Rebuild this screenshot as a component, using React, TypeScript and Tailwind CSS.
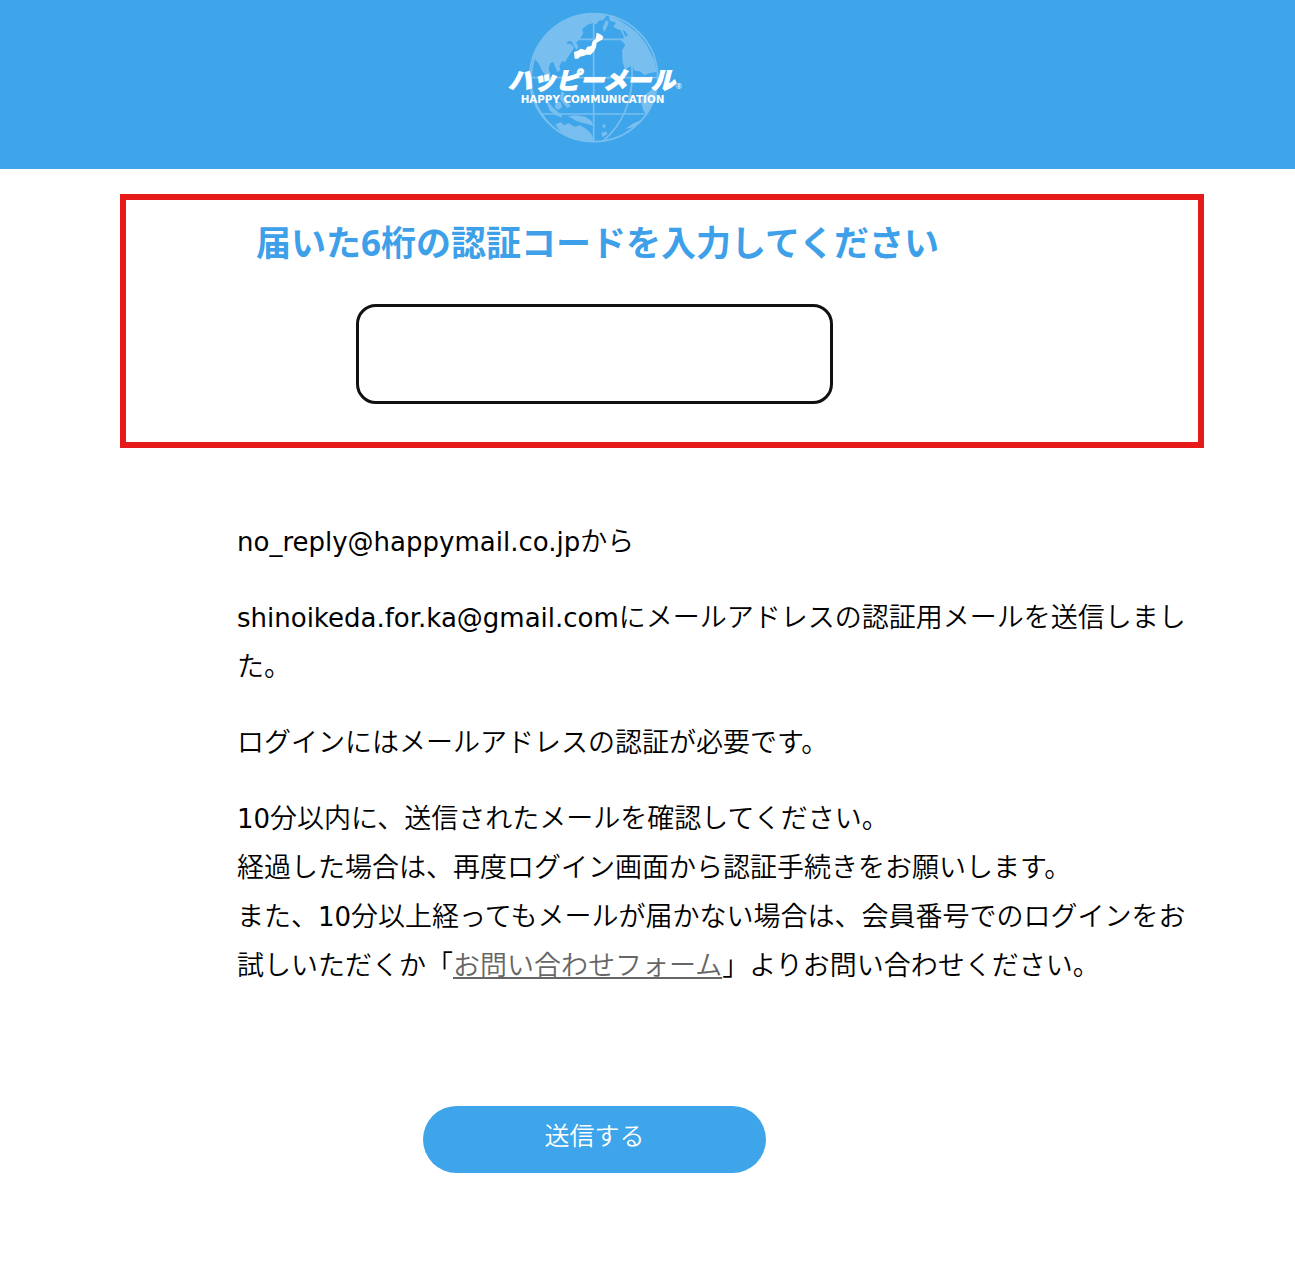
import React, { useState } from 'react';

const Logo: React.FC = () => (
  <svg viewBox="24 36 522 396" className="h-[132px] w-[174px]" role="img" aria-label="ハッピーメール">
    <defs>
      <clipPath id="globe">
        <circle cx="281" cy="233" r="194" />
      </clipPath>
    </defs>

    {/* Globe grid */}
    <g fill="none" stroke="#78bff0" strokeWidth="5">
      <circle cx="281" cy="233" r="192" />
      <g clipPath="url(#globe)">
        <path d="M281 38V428M168 118H394M88 233H474M128 342H434" />
        <path d="M182 66C60 170 70 310 176 398" />
        <path d="M338 50C420 150 420 330 312 420" />
      </g>
    </g>

    {/* Continents */}
    <g fill="#78bff0" clipPath="url(#globe)">
      <path d="M308 42L272 38L200 54L140 98L102 160L90 182L104 176L116 190L124 208L134 224L146 234L152 226L146 208L150 190L160 186L168 206L172 216L182 210L178 198L186 184L196 186L204 170L216 154L222 142L212 132L200 132L204 124L214 124L222 138L230 150L236 140L228 128L240 116L250 100L246 88L262 74L278 70L290 72L296 62L310 60L318 50Z" />
      <path d="M318 60L326 66L320 84L312 96L308 84Z" />
      <path d="M326 46L352 58L382 76L412 98L440 134L464 184L470 216L446 220L434 226L420 214L404 212L396 198L384 202L376 212L368 186L366 152L376 134L362 120L384 106L374 92L352 88L340 80L348 68L330 62Z" />
      <path d="M464 262L446 276L430 288L422 304L430 330L438 344L424 360L400 370L376 386L402 382L426 364L452 330L468 288Z" />
      <path d="M184 274L194 280L190 292L200 304L212 318L202 324L190 310L180 298Z" />
      <path d="M136 296L146 306L158 322L174 336L188 348L182 352L164 344L148 330Z" />
      <path d="M168 304L182 306L186 322L174 330L164 320Z" />
      <path d="M204 348L228 346L256 350L274 362L280 378L262 372L244 368L228 362Z" />
      <path d="M166 374L182 366L192 376L206 370L224 380L240 376L260 388L276 404L280 424L250 424L214 414L184 398Z" />
      <path d="M304 400L318 394L322 402L308 412Z" />
      <circle cx="312" cy="378" r="5" />
    </g>

    {/* Japan */}
    <path
      fill="#fff"
      d="M290 98L300 102L310 110L308 118L298 124L290 128L288 142L282 154L272 164L260 164L250 168L240 170L234 176L224 176L222 156L234 152L242 146L256 150L262 140L274 138L278 124L286 118L288 110Z"
    />

    <g fill="#fff">
      <text
        x="24"
        y="266"
        fontSize="72"
        fontWeight="900"
        fontStyle="italic"
        fontFamily="'Noto Sans CJK JP', sans-serif"
        stroke="#fff"
        strokeWidth="3"
      >
        ハッピーメール
      </text>
      <text x="62" y="309" fontSize="31" fontWeight="700" fontFamily="'DejaVu Sans', sans-serif">
        HAPPY COMMUNICATION
      </text>
      <text x="527" y="268" fontSize="22" fontFamily="'Noto Sans', sans-serif">
        ®
      </text>
    </g>
  </svg>
);

// Latin runs are set in a wider face, one step down from the Japanese text
const Latin: React.FC<{ children: React.ReactNode }> = ({ children }) => (
  <span className="font-['DejaVu_Sans',sans-serif] text-[26px] leading-none font-normal">{children}</span>
);

const App: React.FC = () => {
  const [code, setCode] = useState('');

  return (
    <div className="min-h-screen bg-white font-['Noto_Sans','Noto_Sans_CJK_JP',sans-serif] text-black" lang="ja">
      <header className="flex justify-center bg-[#3ea5ea] pt-3 pr-[106px] pb-[25px]">
        <Logo />
      </header>

      <form className="pt-[25px] pb-[88px]" onSubmit={(e) => e.preventDefault()}>
        {/* Code entry */}
        <section className="mr-[91px] ml-[120px] border-6 border-[#e71a1a] pt-[19px] pr-[135px] pb-[38px]">
          <h1 className="pl-[130px] text-[35px] leading-[48px] font-bold text-[#3ea0e8]">
            <label htmlFor="code">届いた6桁の認証コードを入力してください</label>
          </h1>
          <div className="mt-[37px] flex justify-center">
            <input
              id="code"
              type="text"
              inputMode="numeric"
              maxLength={6}
              value={code}
              onChange={(e) => setCode(e.target.value)}
              className="h-[100px] w-[477px] rounded-[20px] border-3 border-[#111] px-6 text-center text-[35px]"
            />
          </div>
        </section>

        <div className="mt-[68px] mr-[100px] ml-[237px] space-y-[27px] text-[27px] leading-[49px] font-[350]">
          <p>
            <Latin>no_reply@happymail.co.jp</Latin>から
          </p>
          <p>
            <Latin>shinoikeda.for.ka@gmail.com</Latin>にメールアドレスの認証用メールを送信しました。
          </p>
          <p>ログインにはメールアドレスの認証が必要です。</p>
          <p>
            <Latin>10</Latin>分以内に、送信されたメールを確認してください。
            <br />
            経過した場合は、再度ログイン画面から認証手続きをお願いします。
            <br />
            また、<Latin>10</Latin>分以上経ってもメールが届かない場合は、会員番号でのログインをお試しいただくか「
            <a href="#contact" className="text-[#666] underline">お問い合わせフォーム</a>
            」よりお問い合わせください。
          </p>
        </div>

        <div className="mt-[117px] flex justify-center pr-[106px]">
          <button
            type="submit"
            className="h-[67px] w-[343px] rounded-full bg-[#3ea5ea] pb-2 text-[25px] font-[350] text-white"
          >
            送信する
          </button>
        </div>
      </form>
    </div>
  );
};

export default App;
